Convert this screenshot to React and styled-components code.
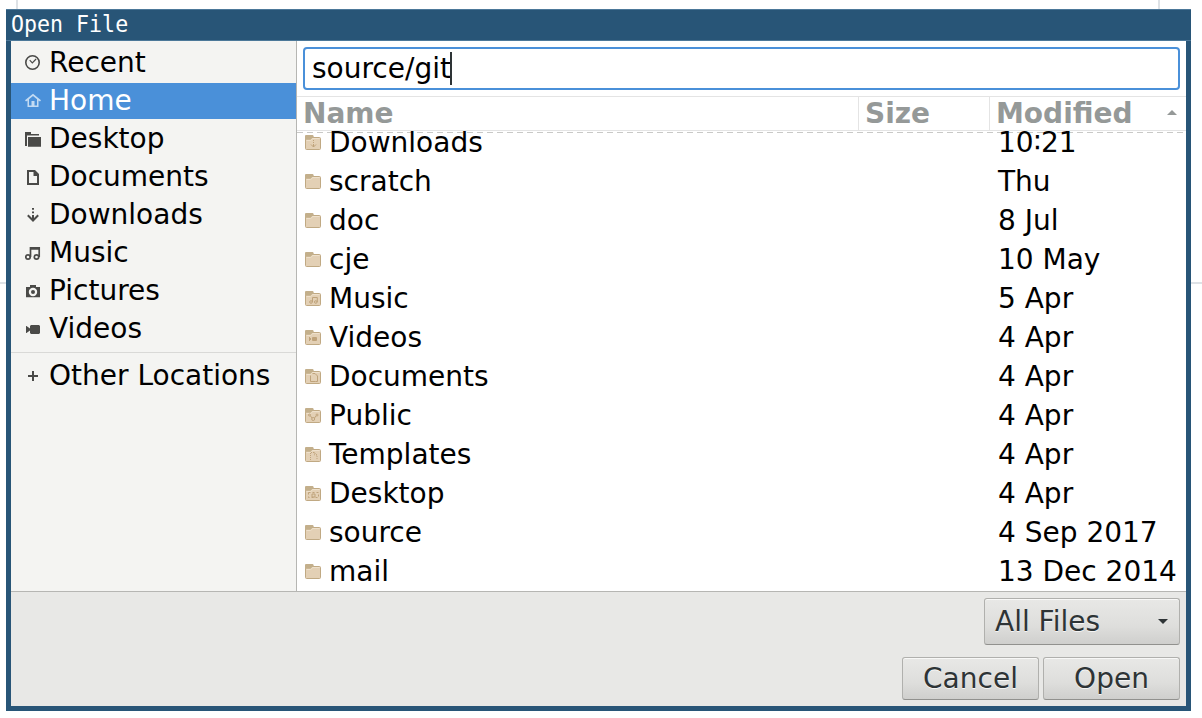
import React from 'react';
import styled, { createGlobalStyle, css } from 'styled-components';

const GlobalStyle = createGlobalStyle`
  * { box-sizing: border-box; }
  body { margin: 0; background: #fff; overflow: hidden; }
`;

const Desktop = styled.div`
  width: 1202px;
  height: 718px;
  padding: 9px 11px 7px 6px;
  background:
    linear-gradient(#dee2e6, #dee2e6) 16px 0 / 2px 9px no-repeat,
    linear-gradient(#dee2e6, #dee2e6) 1158px 0 / 2px 9px no-repeat,
    linear-gradient(#dee2e6, #dee2e6) 0 282px / 1202px 2px no-repeat,
    #fff;
  font: 28px 'DejaVu Sans', sans-serif;
  color: #000;
`;

const Window = styled.section`
  display: flex;
  flex-direction: column;
  height: 702px;
  padding: 0 5px 5px;
  background: #285577;
`;

const TitleBar = styled.header`
  flex: none;
  height: 32px;
  margin: 0 -5px;
  padding-left: 5px;
  border-top: 1px solid #4c7899;
  border-bottom: 1px solid #4c7899;
  font: 23px/29px 'DejaVu Sans Mono', monospace;
  color: #fff;
  white-space: pre;
`;

const Title = styled.span`
  display: inline-block;
  transform: scaleX(0.94);
  transform-origin: left;
`;

const Content = styled.div`
  display: flex;
  flex: none;
  height: 550px;
`;

const Sidebar = styled.nav`
  display: flex;
  flex-direction: column;
  gap: 2px;
  width: 286px;
  padding-top: 4px;
  background: #f4f4f2;
  border-right: 1px solid #b6b6b3;
`;

const Place = styled.div`
  display: flex;
  align-items: center;
  gap: 8px;
  height: 36px;
  padding-left: 14px;
  line-height: 36px;
  color: ${(p) => (p.$selected ? '#fff' : '#000')};
  background: ${(p) => (p.$selected ? '#4a90d9' : 'transparent')};
  white-space: nowrap;
  svg { color: ${(p) => (p.$selected ? '#c3dbf3' : '#4a4a48')}; }
`;

const Separator = styled.div`
  height: 1px;
  margin: 3px 0;
  background: #d9d9d7;
`;

const Icon = styled.svg`
  flex: none;
  display: block;
  width: 16px;
  height: 16px;
`;

const Browser = styled.main`
  display: flex;
  flex-direction: column;
  flex: 1;
  min-width: 0;
  background: #fff;
`;

const PathEntry = styled.div`
  display: flex;
  align-items: center;
  flex: none;
  height: 43px;
  margin: 6px 6px 6px;
  padding-left: 7px;
  border: 2px solid #4a90d9;
  border-radius: 4px;
`;

const Caret = styled.span`
  width: 2px;
  height: 33px;
  margin-left: -1px;
  background: #2e3436;
`;

const columns = css`
  display: grid;
  grid-template-columns: 562px 131px 1fr;
`;

const TableHead = styled.div`
  ${columns}
  flex: none;
  height: 35px;
  border-top: 1px solid #e4e4e4;
  border-bottom: 1px solid #e4e4e4;
  font-weight: bold;
  color: #959998;
`;

const HeadCell = styled.div`
  display: flex;
  align-items: center;
  justify-content: space-between;
  padding: 0 9px 0 6px;
  line-height: 33px;
  border-right: ${(p) => (p.$last ? 'none' : '1px solid #e4e4e4')};
`;

const SortArrow = styled.span`
  margin-bottom: 2px;
  border: 5px solid transparent;
  border-top: none;
  border-bottom-color: #959998;
`;

const Viewport = styled.div`
  position: relative;
  isolation: isolate;
  flex: 1;
  overflow: hidden;
`;

const Undershoot = styled.div`
  position: absolute;
  z-index: -1;
  inset: 1px 0 auto;
  height: 1px;
  background: repeating-linear-gradient(90deg, #c9c9c7 0 6px, #fff 6px 10px);
`;

const Rows = styled.div`
  margin-top: -8px;
`;

const Row = styled.div`
  ${columns}
  height: 39px;
  line-height: 39px;
  white-space: nowrap;
`;

const NameCell = styled.div`
  display: flex;
  align-items: center;
  gap: 8px;
  padding-left: 8px;
`;

const DateCell = styled.div`
  grid-column: 3;
  padding-left: 8px;
`;

const Footer = styled.footer`
  display: flex;
  flex-direction: column;
  align-items: flex-end;
  gap: 12px;
  flex: 1;
  padding: 6px 6px 0;
  background: #e8e8e6;
  border-top: 1px solid #b6b6b3;
`;

const Actions = styled.div`
  display: flex;
  gap: 4px;
`;

const Button = styled.button`
  display: flex;
  align-items: center;
  justify-content: ${(p) => (p.$combo ? 'space-between' : 'center')};
  width: ${(p) => (p.$combo ? 196 : 137)}px;
  height: ${(p) => (p.$combo ? 47 : 43)}px;
  padding: 0 ${(p) => (p.$combo ? 11 : 0)}px 0 ${(p) => (p.$combo ? 10 : 0)}px;
  border: 1px solid #b0b0ad;
  border-bottom-color: #91918e;
  border-radius: 3px;
  background: linear-gradient(#e8e8e6, #dededc 60%, #cfcfcd);
  box-shadow: inset 0 1px #f8f8f7;
  font: 28px 'DejaVu Sans', sans-serif;
  color: #2e3436;
  text-shadow: 0 1px rgba(255, 255, 255, 0.75);
`;

const DropArrow = styled.span`
  border: 5px solid transparent;
  border-bottom: none;
  border-top-color: #2e3436;
`;

const placeIcons = {
  recent: (
    <g fill="none" stroke="currentColor">
      <circle cx="7.5" cy="7.5" r="6.7" strokeWidth="1.6" />
      <path d="M4.700 5.200l2.600 2.600 3.800-3.800" strokeWidth="1.200" />
    </g>
  ),
  home: (
    <path fill="currentColor" fillRule="evenodd" d="M8 .8L0 7.200l1 1.300 1.500-1V14h11V7.500l1.500 1 1-1.300zM8 3l4 3.300V12.500H9.500V8h-3v4.500H4V6.300z" />
  ),
  desktop: (
    <path fill="currentColor" d="M0 1h6v2h8v1.500H2V15H0zM3 6h13v9.700H3z" />
  ),
  documents: (
    <path fill="currentColor" fillRule="evenodd" d="M2 1h8l4 4v11H2zM4 3v11h8V7H8.500V3z" />
  ),
  downloads: (
    <g fill="currentColor">
      <path d="M7 1h2v1.700H7zM7 4.500h2v1.700H7zM7 8h2v5H7z" />
      <path d="M2.800 8.300L8 13.500 13.200 8.300" fill="none" stroke="currentColor" strokeWidth="2" />
    </g>
  ),
  music: (
    <g fill="none" stroke="currentColor" strokeWidth="1.700">
      <circle cx="3" cy="12" r="2.200" />
      <circle cx="11.500" cy="12" r="2.200" />
      <path d="M5.500 12V2.800H14.200V12M5.500 4h8" />
    </g>
  ),
  pictures: (
    <path fill="currentColor" fillRule="evenodd" d="M5 2h6v2h4v10.300H1V4h4zM8 4.800a4.200 4.200 0 1 0 0 8.400 4.200 4.200 0 0 0 0-8.400zm0 2.200a2 2 0 1 1 0 4 2 2 0 0 1 0-4z" />
  ),
  videos: <path fill="currentColor" d="M5 5l1-1h8l1 1v7l-1 1H6l-1-1V9.500L1.500 12H1V5h.5L5 7.500z" />,
  other: <path fill="currentColor" d="M7 3h2v4h4v2H9v4H7V9H3V7h4z" />,
};

const emblems = {
  downloads: <path d="M8.500 6v1M8.500 8v1M8.500 10v3M6 10.500l2.500 2.500 2.500-2.500" />,
  music: (
    <>
      <circle cx="6" cy="12" r="1.300" />
      <circle cx="10.800" cy="12" r="1.300" />
      <path d="M7.500 12V7.500h4.800V12" />
    </>
  ),
  videos: <path d="M7.500 8.500h4v3h-4zM7.500 9.500h4M7.500 10.500h4M4.500 8v4M5.500 9v2" />,
  documents: <path d="M5.500 7.500v6h5M7.500 5.500h2.500l2.500 2.500v5.500h-2" />,
  publicFolder: (
    <>
      <circle cx="4.500" cy="8" r="1" />
      <circle cx="12" cy="8" r="1" />
      <circle cx="8.200" cy="12" r="1.500" />
      <path d="M5.500 9l1.500 2M11 9l-1.500 2" />
    </>
  ),
  templates: <path strokeDasharray="1 1" d="M5.500 14V6.500h4l2.500 2.500v5M9.500 6.500v2.500h2.500" />,
  desktop: (
    <>
      <path strokeDasharray="2 2" d="M3.500 7.500h10v5h-10z" />
      <path d="M7 9h3v3H7z" />
    </>
  ),
};

function Folder({ emblem }) {
  return (
    <Icon viewBox="0 0 16 16">
      <rect x=".5" y="2.500" width="15" height="12" rx="1" fill="#e3d0b5" stroke="#c0a983" />
      <path d="M7 3.500h7.500" stroke="#eee0cb" />
      <path d="M1.500 5.500h4l2-1.500" fill="none" stroke="#eee0cb" />
      <path d="M0 4.800V1q0-1 1-1h6.500q1 0 1 1l.5 1.500-2 .8-1.500 1.500z" fill="#c3af8b" />
      <g transform="translate(0 -1)" fill="none" stroke="#bfa37b">{emblem && emblems[emblem]}</g>
    </Icon>
  );
}

const places = [
  ['recent', 'Recent'],
  ['home', 'Home'],
  ['desktop', 'Desktop'],
  ['documents', 'Documents'],
  ['downloads', 'Downloads'],
  ['music', 'Music'],
  ['pictures', 'Pictures'],
  ['videos', 'Videos'],
];

const files = [
  ['Downloads', '10∶21', 'downloads'],
  ['scratch', 'Thu'],
  ['doc', '8 Jul'],
  ['cje', '10 May'],
  ['Music', '5 Apr', 'music'],
  ['Videos', '4 Apr', 'videos'],
  ['Documents', '4 Apr', 'documents'],
  ['Public', '4 Apr', 'publicFolder'],
  ['Templates', '4 Apr', 'templates'],
  ['Desktop', '4 Apr', 'desktop'],
  ['source', '4 Sep 2017'],
  ['mail', '13 Dec 2014'],
];

function PlaceItem({ icon, label, selected }) {
  return (
    <Place $selected={selected}>
      <Icon viewBox="0 0 16 16">{placeIcons[icon]}</Icon>
      <span>{label}</span>
    </Place>
  );
}

export default function App() {
  return (
    <Desktop>
      <GlobalStyle />
      <Window>
        <TitleBar>
          <Title>Open File</Title>
        </TitleBar>
        <Content>
          <Sidebar>
            {places.map(([icon, label]) => (
              <PlaceItem key={icon} icon={icon} label={label} selected={icon === 'home'} />
            ))}
            <Separator />
            <PlaceItem icon="other" label="Other Locations" />
          </Sidebar>
          <Browser>
            <PathEntry>
              <span>source/git</span>
              <Caret />
            </PathEntry>
            <TableHead>
              <HeadCell>Name</HeadCell>
              <HeadCell>Size</HeadCell>
              <HeadCell $last>
                Modified
                <SortArrow />
              </HeadCell>
            </TableHead>
            <Viewport>
              <Undershoot />
              <Rows>
                {files.map(([name, date, emblem]) => (
                  <Row key={name}>
                    <NameCell>
                      <Folder emblem={emblem} />
                      <span>{name}</span>
                    </NameCell>
                    <DateCell>{date}</DateCell>
                  </Row>
                ))}
              </Rows>
            </Viewport>
          </Browser>
        </Content>
        <Footer>
          <Button $combo>
            All Files
            <DropArrow />
          </Button>
          <Actions>
            <Button>Cancel</Button>
            <Button>Open</Button>
          </Actions>
        </Footer>
      </Window>
    </Desktop>
  );
}
